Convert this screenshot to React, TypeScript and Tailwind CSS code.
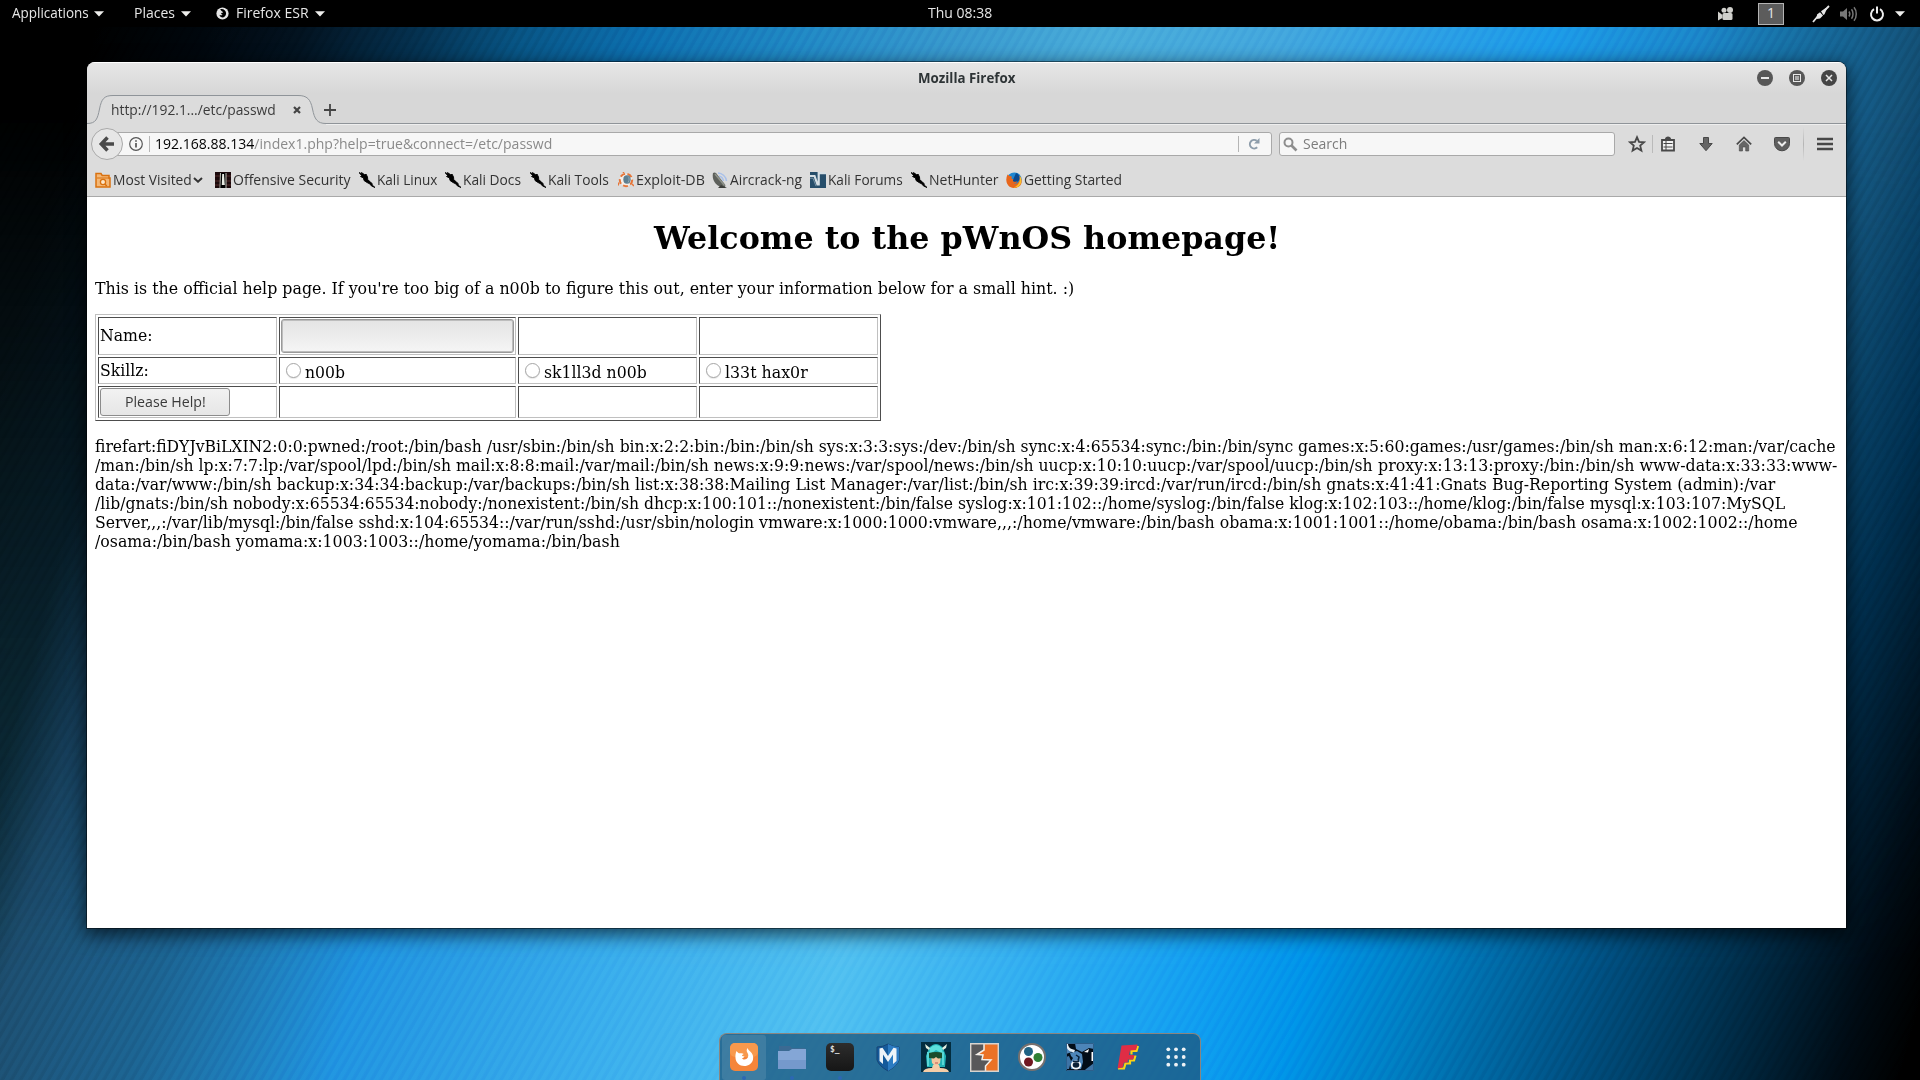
import { useLayoutEffect, useRef, useState } from "react";
import type { ReactNode } from "react";

/* Text squeezed or stretched horizontally to fill a given width. */
function Fit({ w, children, className = "" }: { w: number; children: ReactNode; className?: string }) {
  const ref = useRef<HTMLSpanElement>(null);
  const [scale, setScale] = useState(1);
  useLayoutEffect(() => {
    if (ref.current) setScale(w / ref.current.offsetWidth);
  }, [w]);
  return (
    <span className={"block shrink-0 whitespace-pre " + className} style={{ width: w }}>
      <span ref={ref} className="inline-block origin-left" style={{ transform: `scaleX(${scale})` }}>
        {children}
      </span>
    </span>
  );
}

function Caret({ className = "" }: { className?: string }) {
  return (
    <svg width="10" height="6" viewBox="0 0 10 6" className={"shrink-0 " + className}>
      <path d="M0 .3h10L5 5.6z" fill="#eeeeec" />
    </svg>
  );
}

function TopBar() {
  return (
    <header className="flex h-[27px] w-full items-center bg-black text-[14px] leading-[25px] text-[#e6e6e6]">
      <div className="flex items-center pl-3">
        <Fit w={77} className="pb-[2px]">Applications</Fit>
        <Caret className="ml-[5px]" />
      </div>
      <div className="ml-[30px] flex items-center">
        <Fit w={41} className="pb-[2px]">Places</Fit>
        <Caret className="ml-[6px]" />
      </div>
      <div className="ml-[25px] flex items-center">
        <svg width="13" height="13" viewBox="0 0 13 13" className="shrink-0">
          <circle cx="6.5" cy="6.5" r="6.1" fill="#e6e6e6" />
          <path d="M4.2 2.2c2.8-.8 5.8.9 5.9 4 0 2.600-1.800 4.300-4 4.200C4.700 10.300 3.500 9.200 3.600 7.800c.8.700 2.200.8 3-.1C5.600 7.500 5 7 5.200 6.100l2-.7C6.600 4.300 5.300 4.400 4.200 2.200z" fill="#000" />
        </svg>
        <Fit w={73} className="ml-[7px] pb-[2px]">Firefox ESR</Fit>
        <Caret className="ml-[6px]" />
      </div>
      <Fit w={64} className="ml-[603px] pb-[2px]">Thu 08:38</Fit>
      <svg width="17" height="14" viewBox="0 0 17 14" className="ml-[725px] shrink-0" fill="#d0d0cc">
        <circle cx="7" cy="3.200" r="2.500" />
        <circle cx="13" cy="3" r="3" />
        <rect x="5.500" y="6" width="10" height="7" rx="1.500" />
        <path d="M1 4.500l4.500 3.500v3L1 13.500z" />
      </svg>
      <div className="ml-[24px] flex h-[22px] w-[26px] shrink-0 items-center justify-center border border-[#b4b4b4] bg-[#5c5c5c] pb-[2px]">1</div>
      <svg width="18" height="18" viewBox="0 0 18 18" className="ml-[28px] shrink-0">
        <path d="M1 17l5-6M12 6l5-5" stroke="#e6e6e6" strokeWidth="1.800" />
        <path d="M4.500 14L5 9.500 8 7.200l3 3.300-3 3zM9 6.200L13.700 3l1 1.200L12.500 9.200l-1.200.8z" fill="#e6e6e6" />
      </svg>
      <svg width="17" height="16" viewBox="0 0 17 16" className="ml-[10px] shrink-0" fill="none" stroke="#777">
        <path d="M0 5.500h3L7 2v12L3 10.500H0z" fill="#777" stroke="none" />
        <path d="M9 5.500c1 1.500 1 3.500 0 5M11.500 3.300c2 2.500 2 7 0 9.400M14 1.200c3 3.500 3 10 0 13.600" strokeWidth="1.500" />
      </svg>
      <svg width="16" height="16" viewBox="0 0 16 16" className="ml-[12px] shrink-0" fill="none" stroke="#eee" strokeWidth="2">
        <path d="M5 3.200a6 6 0 1 0 6 0M8 .5v7" />
      </svg>
      <Caret className="ml-[10px]" />
    </header>
  );
}

function TitleBar() {
  return (
    <div className="relative flex h-[32px] items-center border-t border-white bg-linear-to-b from-[#e6e6e6] to-[#d7d7d7]">
      <Fit w={97} className="ml-[831px] pb-[2px] text-[14px] font-bold text-[#2e3436]">Mozilla Firefox</Fit>
      <div className="ml-auto mr-[9px] flex gap-4 pb-px">
        <svg width="16" height="16" viewBox="0 0 16 16">
          <circle cx="8" cy="8" r="8" fill="#575757" />
          <path d="M4 8h8" stroke="#e8e8e8" strokeWidth="2" />
        </svg>
        <svg width="16" height="16" viewBox="0 0 16 16">
          <circle cx="8" cy="8" r="8" fill="#575757" />
          <rect x="4.500" y="4.500" width="7" height="7" fill="none" stroke="#e8e8e8" />
          <rect x="6" y="6" width="4" height="4" fill="#aaa" />
        </svg>
        <svg width="16" height="16" viewBox="0 0 16 16">
          <circle cx="8" cy="8" r="8" fill="#454545" />
          <path d="M5 5l6 6M11 5l-6 6" stroke="#e8e8e8" strokeWidth="1.500" />
        </svg>
      </div>
    </div>
  );
}

function TabStrip() {
  return (
    <div className="relative h-[31px] bg-[#d7d7d7]">
      <svg width="1759" height="31" viewBox="0 0 1759 31" className="absolute inset-0">
        <path d="M0 30V29.500C9 29.500 10.500 25 12.500 15C14.500 5 17 1.500 26 1.500H211C220 1.500 223.500 5 225.500 15C227.500 25 230 29.500 239 29.500H1759V31H0z" fill="#dcdcdc" />
        <path d="M0 29.500C9 29.500 10.500 25 12.500 15C14.500 5 17 1.500 26 1.500H211C220 1.500 223.500 5 225.500 15C227.500 25 230 29.500 239 29.500H1759" fill="none" stroke="#8f9499" />
        <path d="M239 30.500H1759" stroke="#eee" />
      </svg>
      <div className="relative flex h-[31px] items-center text-[14px] text-[#3b3b3b]">
        <Fit w={165} className="ml-[24px]">http://192.1.../etc/passwd</Fit>
        <svg width="8" height="8" viewBox="0 0 8 8" className="ml-[17px]">
          <path d="M1 1l6 6M7 1L1 7" stroke="#444" strokeWidth="2.200" />
        </svg>
        <svg width="12" height="12" viewBox="0 0 12 12" className="ml-[23px]">
          <path d="M0 6h12M6 0v12" stroke="#444" strokeWidth="1.800" />
        </svg>
      </div>
    </div>
  );
}

function NavBar() {
  return (
    <div className="flex h-[38px] items-center text-[14px]">
      <svg width="34" height="34" viewBox="0 0 34 34" className="relative z-10 ml-[3px] shrink-0">
        <circle cx="17" cy="17" r="15.500" fill="#e6e6e6" stroke="#a9a9a9" />
        <path d="M17.500 10.500L11.300 17l6.200 6.500M12 17H24" fill="none" stroke="#4a4a4a" strokeWidth="3.500" />
      </svg>
      <div className="-ml-[8px] flex h-[24px] w-[1156px] shrink-0 items-center rounded-r-[3px] border border-[#a9a9a9] bg-[#f7f7f7]">
        <svg width="14" height="14" viewBox="0 0 14 14" className="ml-[12px] shrink-0">
          <circle cx="7" cy="7" r="6.300" fill="none" stroke="#555" strokeWidth="1.200" />
          <path d="M7 6v4.500M7 3.200v1.600" stroke="#555" strokeWidth="1.700" />
        </svg>
        <div className="ml-[6px] h-4 w-px bg-[#b5b5b5]" />
        <Fit w={397} className="ml-[5px] pb-px text-[#8a8a8a]"><span className="text-black">192.168.88.134</span>/index1.php?help=true&amp;connect=/etc/passwd</Fit>
        <div className="ml-auto h-4 w-px bg-[#b5b5b5]" />
        <svg width="12" height="12" viewBox="0 0 12 12" className="ml-[9px] mr-[11px] shrink-0">
          <path d="M9.200 9.300A4.300 4.300 0 1 1 8.800 2.800" fill="none" stroke="#8d9caa" strokeWidth="2" />
          <path d="M11.500 0v5.500H6z" fill="#8d9caa" />
        </svg>
      </div>
      <div className="ml-[7px] flex h-[24px] w-[336px] shrink-0 items-center rounded-[3px] border border-[#a9a9a9] bg-[#f7f7f7]">
        <svg width="15" height="15" viewBox="0 0 15 15" className="ml-[3px]">
          <circle cx="5.500" cy="5.500" r="4" fill="none" stroke="#8e8e8e" strokeWidth="2" />
          <path d="M8.500 8.500l5 5" stroke="#8e8e8e" strokeWidth="2.600" />
        </svg>
        <Fit w={44} className="ml-[5px] pb-px text-[#7c7c7c]">Search</Fit>
      </div>
      <svg width="18" height="18" viewBox="0 0 18 18" className="ml-[13px] shrink-0">
        <path d="M9 2.200l2 4.600 5 .5-3.800 3.300 1.200 5L9 13l-4.400 2.600 1.200-5L2 7.300l5-.5z" fill="none" stroke="#484848" strokeWidth="1.800" />
      </svg>
      <div className="ml-[6px] h-[18px] w-px bg-[#bababa]" />
      <svg width="16" height="16" viewBox="0 0 16 16" className="ml-[7px] shrink-0">
        <path d="M5 3c0-1.300 1.500-2.500 3-2.500S11 1.700 11 3z" fill="#484848" />
        <path d="M2 4h12v10.500H2z" fill="#f2f2f2" stroke="#484848" strokeWidth="1.800" />
        <path d="M3.500 7.500h9M3.500 11h9M6 5v9" stroke="#484848" strokeWidth="1" />
      </svg>
      <svg width="16" height="16" viewBox="0 0 16 16" className="ml-[22px] shrink-0">
        <path d="M5.500 1.500h5v6h3.700L8 14.700 1.800 7.500h3.700z" fill="#666" stroke="#484848" />
      </svg>
      <svg width="16" height="16" viewBox="0 0 16 16" className="ml-[22px] shrink-0">
        <path d="M.8 8.300L8 1.500l7.200 6.800" fill="none" stroke="#484848" strokeWidth="1.700" />
        <path d="M3.300 9L8 4.600 12.700 9v6H9.700v-4H6.500v4H3.300z" fill="#666" stroke="#484848" strokeWidth=".6" />
      </svg>
      <svg width="16" height="16" viewBox="0 0 16 16" className="ml-[22px] shrink-0">
        <path d="M.5 2.500Q.5 1.500 1.500 1.500h13q1 0 1 1V7.500a7.500 7.300 0 0 1-15 0z" fill="#5f5f5f" stroke="#484848" />
        <path d="M4.200 5.800L8 9.500l3.800-3.700" fill="none" stroke="#eee" strokeWidth="2" />
      </svg>
      <div className="ml-[13px] h-[34px] w-px bg-linear-to-b from-transparent via-[#b5b5b5] to-transparent" />
      <svg width="16" height="14" viewBox="0 0 16 14" className="ml-[13px] shrink-0">
        <path d="M0 2h16M0 7h16M0 12h16" stroke="#484848" strokeWidth="2.600" />
      </svg>
    </div>
  );
}

const Dragon = () => (
  <svg width="16" height="16" viewBox="0 0 16 16" className="shrink-0">
    <path d="M0 .5L3 2l-.5-1.500L6 3l1-1 1.500 3 .3 3L11 9.500l2 2 .2 1.500 2.800 2.500-3.500-1.500-1.500-2L8 10.500 5 8.500 4.500 6 1.500 4.500 3 4z" fill="#000" stroke="#000" strokeWidth=".9" />
  </svg>
);

const VisitedIcon = () => (
  <svg width="16" height="16" viewBox="0 0 16 16" className="shrink-0">
    <path d="M1 15V1.500h5l1.200 2H14V6h1v9z" fill="#f4b877" stroke="#d9710f" strokeWidth="1.500" />
    <path d="M2 6h12" stroke="#d9710f" />
    <circle cx="8" cy="10" r="2.600" fill="#fde6c8" stroke="#d9710f" strokeWidth="1.300" />
    <path d="M9.800 12l2 2" stroke="#d9710f" strokeWidth="1.500" />
  </svg>
);

const OffsecIcon = () => (
  <svg width="16" height="16" viewBox="0 0 16 16" className="shrink-0">
    <path d="M0 0h16v16H0z" fill="#1c0a0c" />
    <path d="M0 4h5M11 4h5M0 9h5M11 9h5M0 13h5M11 13h5" stroke="#40201f" strokeWidth="1.500" />
    <path d="M5 1h6.500v15H4.500z" fill="#b9bcb4" />
    <path d="M6 1h4.500v15H5.300z" fill="#000" />
    <path d="M7.200 2h1.800L9.800 13H6.800z" fill="#e9ece4" />
  </svg>
);

const ExploitIcon = () => (
  <svg width="16" height="16" viewBox="0 0 16 16" className="shrink-0">
    <circle cx="8" cy="8" r="6.200" fill="#f3eee9" stroke="#e6763a" strokeWidth="2" strokeDasharray="5 2.500" />
    <path d="M1 10.500l-1 3M14 12l2 2M5 1l1-1" stroke="#e6763a" strokeWidth="1.500" />
    <ellipse cx="9" cy="7.500" rx="3.700" ry="4.200" fill="#5e7f91" />
    <path d="M10 4.500c1.500 1 1.500 4 0 6" stroke="#8fa9b5" fill="none" />
  </svg>
);

const AircrackIcon = () => (
  <svg width="16" height="16" viewBox="0 0 16 16" className="shrink-0">
    <path d="M1 1C-.5 8 4 15 12.500 15.500c1-1 1-2 .5-3L4 1C3 .3 2 .3 1 1z" fill="#5d605b" />
    <path d="M3 2l9.500 11.500" stroke="#8f948b" strokeWidth="1.500" />
    <path d="M6 1c4 0 8 3.500 8.500 8M7 4c2.500.5 4 2.500 4.500 5" fill="none" stroke="#a9c1ea" strokeWidth="1.500" />
    <path d="M9 13l6 3H6z" fill="#3c3e3a" />
  </svg>
);

const ForumsIcon = () => (
  <svg width="16" height="16" viewBox="0 0 16 16" className="shrink-0">
    <path d="M0 0h16v16H0z" fill="#264e6b" />
    <path d="M0 4h4.500l3 8.500h1.200V1.200H16" fill="none" stroke="#d5dfe5" strokeWidth="2.200" />
    <path d="M0 6.200h3l3 8" fill="none" stroke="#7793a5" />
  </svg>
);

const FirefoxIcon = () => (
  <svg width="16" height="16" viewBox="0 0 16 16" className="shrink-0">
    <circle cx="8.300" cy="7.800" r="7.400" fill="#1f86d0" />
    <path d="M10 1c3 1 4 4 3.500 7l-4 3-3-2" fill="#0b4a91" />
    <path d="M1.500 2.500c.8.300 1.500 1 2 1.600 1 0 2 .4 2.700.9-1 .6-1 1.500-.2 2l1.500.3C6.500 8.300 7 9.800 8.500 9.800c1.500-.2 2-.6 2.700-.2-1 2-2.500 2.500-4.500 2 3.500 1.500 6-1 6.800-3.600.4-2 .2-3-.3-4.500 3 3 3.300 7.500.8 10.300-3 3-8.500 3-11.500-.1C-.3 10.700-.2 6.200 1.500 2.500z" fill="#e8661b" />
    <path d="M13.800 4c2.500 3 2 8-1 10.200-2 1.400-4 1.500-5.500 1 3.500-.5 7.500-4 6.500-11.200z" fill="#fbc02a" />
  </svg>
);

const bookmarks: { label: string; w: number; gap: string; Icon: () => ReactNode }[] = [
  { label: "Offensive Security", w: 118, gap: "ml-[12px]", Icon: OffsecIcon },
  { label: "Kali Linux", w: 60, gap: "ml-[8px]", Icon: Dragon },
  { label: "Kali Docs", w: 58, gap: "ml-[8px]", Icon: Dragon },
  { label: "Kali Tools", w: 61, gap: "ml-[9px]", Icon: Dragon },
  { label: "Exploit-DB", w: 69, gap: "ml-[9px]", Icon: ExploitIcon },
  { label: "Aircrack-ng", w: 72, gap: "ml-[7px]", Icon: AircrackIcon },
  { label: "Kali Forums", w: 75, gap: "ml-[8px]", Icon: ForumsIcon },
  { label: "NetHunter", w: 69, gap: "ml-[8px]", Icon: Dragon },
  { label: "Getting Started", w: 98, gap: "ml-[8px]", Icon: FirefoxIcon },
];

function Bookmarks() {
  return (
    <div className="flex h-[34px] items-center border-b border-[#a9a9a9] pl-2 text-[14px] text-[#333]">
      <VisitedIcon />
      <Fit w={79} className="ml-[2px]">Most Visited</Fit>
      <svg width="10" height="6" viewBox="0 0 10 6" className="ml-[1px]">
        <path d="M1 1l4 3.700L9 1" fill="none" stroke="#333" strokeWidth="2" />
      </svg>
      {bookmarks.map(({ label, w, gap, Icon }) => (
        <div key={label} className={"flex items-center " + gap}>
          <Icon />
          <Fit w={w} className="ml-[2px]">{label}</Fit>
        </div>
      ))}
    </div>
  );
}

function Cell({ children }: { children?: ReactNode }) {
  return (
    <div className="flex items-center border border-t-[#4d4d4d] border-r-[#c0c0c0] border-b-[#c0c0c0] border-l-[#4d4d4d] pl-px">
      {children}
    </div>
  );
}

function Radio({ label, w }: { label: string; w: number }) {
  return (
    <>
      <span className="ml-[5px] h-[15px] w-[15px] shrink-0 rounded-full border border-[#a5a5a5] bg-white shadow-[0_1px_1px_#00000018]" />
      <Fit w={w} className="ml-[4px] pt-[3px]">{label}</Fit>
    </>
  );
}

const passwd: [string, number][][] = [
  [
    ["firefart:fiDYJvBiLXIN2:0:0:pwned:/root:/bin/bash /usr/sbin:/bin/sh bin:x:2:2:bin:/bin:/bin/sh sys:x:3:3:sys:/dev:/bin/sh sync:x:4:65534:sync:/bin:/bin/sync ", 1203],
    ["games:x:5:60:games:/usr/games:/bin/sh man:x:6:12:man:/var/cache", 538],
  ],
  [
    ["/man:/bin/sh lp:x:7:7:lp:/var/spool/lpd:/bin/sh mail:x:8:8:mail:/var/mail:/bin/sh news:x:9:9:news:/var/spool/news:/bin/sh uucp:x:10:10:uucp:/var/spool/uucp:/bin/sh ", 1283],
    ["proxy:x:13:13:proxy:/bin:/bin/sh www-data:x:33:33:www-", 459],
  ],
  [["data:/var/www:/bin/sh backup:x:34:34:backup:/var/backups:/bin/sh list:x:38:38:Mailing List Manager:/var/list:/bin/sh irc:x:39:39:ircd:/var/run/ircd:/bin/sh gnats:x:41:41:Gnats Bug-Reporting System (admin):/var", 1680]],
  [
    ["/lib/gnats:/bin/sh nobody:x:65534:65534:nobody:/nonexistent:/bin/sh dhcp:x:100:101::/nonexistent:/bin/false ", 863],
    ["syslog:x:101:102::/home/syslog:/bin/false klog:x:102:103::/home/klog:/bin/false mysql:x:103:107:MySQL", 827],
  ],
  [
    ["Server,,,:/var/lib/mysql:/bin/false sshd:x:104:65534::/var/run/sshd:/usr/sbin/nologin ", 664],
    ["vmware:x:1000:1000:vmware,,,:/home/vmware:/bin/bash obama:x:1001:1001::/home/obama:/bin/bash osama:x:1002:1002::/home", 1039],
  ],
  [["/osama:/bin/bash yomama:x:1003:1003::/home/yomama:/bin/bash", 525]],
];

function Page() {
  return (
    <main className="flex-1 bg-white px-2 pt-[23px] font-['DejaVu_Serif',serif] text-[16px] leading-[19px] text-black">
      <h1 className="flex h-[37px] justify-center text-[32px] leading-[37px] font-bold">
        <Fit w={626}>Welcome to the pWnOS homepage!</Fit>
      </h1>
      <Fit w={979} className="mt-[22px] h-[19px]">This is the official help page. If you're too big of a n00b to figure this out, enter your information below for a small hint. :)</Fit>
      <div className="mt-[16px] grid h-[107px] w-[786px] grid-cols-[179px_237px_179px_179px] grid-rows-[38px_27px_32px] gap-[2px] border border-t-[#c0c0c0] border-r-[#4d4d4d] border-b-[#4d4d4d] border-l-[#c0c0c0] p-[2px]">
        <Cell><Fit w={53} className="pb-[2px]">Name:</Fit></Cell>
        <Cell>
          <div className="h-[34px] w-[233px] rounded-[3px] border border-[#999] bg-linear-to-b from-[#e4e4e4] to-[#f5f5f5] shadow-[inset_0_0_0_1px_#bdbdbd]" />
        </Cell>
        <Cell />
        <Cell />
        <Cell><Fit w={49}>Skillz:</Fit></Cell>
        <Cell><Radio label="n00b" w={40} /></Cell>
        <Cell><Radio label="sk1ll3d n00b" w={103} /></Cell>
        <Cell><Radio label="l33t hax0r" w={83} /></Cell>
        <Cell>
          <button className="flex h-[28px] w-[130px] items-center justify-center rounded-[3px] border border-[#8c8c8c] bg-linear-to-b from-[#f2f2f2] to-[#e6e6e6] font-['Open_Sans',sans-serif] text-[14px] text-[#3a3a3a]">
            <Fit w={81} className="pb-px text-left">Please Help!</Fit>
          </button>
        </Cell>
        <Cell />
        <Cell />
        <Cell />
      </div>
      <div className="mt-[16px]">
        {passwd.map((line, i) => (
          <div key={i} className="flex h-[19px]">
            {line.map(([text, w]) => <Fit key={text} w={w}>{text}</Fit>)}
          </div>
        ))}
      </div>
    </main>
  );
}

const dots = [5, 12, 19];

function Dock() {
  return (
    <nav className="mx-auto mt-auto flex h-[47px] w-[482px] items-center rounded-t-[8px] border border-b-0 border-[#8a8580] bg-[#1e577dc4]">
      <div className="relative mr-[2px] ml-[2px] flex h-[45px] w-[44px] shrink-0 items-center justify-center rounded-[3px] bg-white/10">
        <svg width="28" height="28" viewBox="0 0 28 28">
          <rect width="28" height="28" rx="5" fill="#f5853a" />
          <rect width="28" height="14" rx="5" fill="#f8994d" />
          <path d="M6.500 8c1.500 2 2.300 2.500 4 2.300 1.600-.2 2.600.2 3.200.7-1.200.5-1.700 1.300-1.700 2l2.500.6c-.8 1.200-1.500 1.500-2.500 1.600 1 1.800 3.300 1.600 4.700.5 2-1.600 2-4.200.7-6-1-1.600-1-3.200.2-4.700.4 1.600 1.200 2.200 2.400 3.300 2.600 2.200 3.700 5 3 8.200-.9 4-4.400 6.500-8.700 6.500-4.800 0-8.500-3.400-8.800-8-.2-2.500 0-4.800 1-7z" fill="#fff" />
        </svg>
        <span className="absolute bottom-0 h-1 w-1 rounded-full bg-[#2c67b4]" />
      </div>
      <div className="relative flex h-[45px] w-12 shrink-0 items-center justify-center">
        <svg width="28" height="28" viewBox="0 0 28 28">
          <path d="M1 3h11l2 2h13v6H1z" fill="#3b6a93" />
          <path d="M0 8h11l3-2h14v20H0z" fill="#84a6d6" />
          <path d="M0 17h28v9H0z" fill="#7599cc" />
        </svg>
        <span className="absolute bottom-0 h-1 w-1 rounded-full bg-[#2c67b4]" />
      </div>
      <div className="relative flex h-[45px] w-12 shrink-0 items-center justify-center">
        <div className="h-7 w-7 rounded-[5px] bg-linear-to-b from-[#2d2d2d] to-[#161616] pt-[2px] pl-[4px] font-['DejaVu_Sans_Mono',monospace] text-[8px] leading-[9px] font-bold text-[#ddd]">$_</div>
        <span className="absolute bottom-0 h-1 w-1 rounded-full bg-[#2c67b4]" />
      </div>
      <div className="flex w-12 shrink-0 justify-center">
        <svg width="24" height="29" viewBox="0 0 24 29">
          <path d="M1 4q6 0 11-3 5 3 11 3v13q-2 6-11 11Q3 23 1 17z" fill="#155a9b" stroke="#164576" />
          <path d="M12 1q5 3 11 3v13q-2 6-11 11z" fill="#2c7bc2" />
          <path d="M3.500 5.500l3-.8 5.500 8.300 5.500-8.300 3 .8V18L17 21V11.500L12 19 7 11.500V21L3.500 18z" fill="#eef3f8" />
        </svg>
      </div>
      <div className="flex w-12 shrink-0 justify-center">
        <svg width="30" height="30" viewBox="0 0 30 30">
          <path d="M0 0h30v30H0z" fill="#032d3f" />
          <path d="M8 6q7-8 14 0l3 8-1 11H6L5 14z" fill="#21b2b7" />
          <path d="M9 6q6-6 12 0l1 6-7-4-7 5z" fill="#5ce0dc" />
          <path d="M4 2l5 4-1 2-3-2zM26 2l-5 4 1 2 3-2z" fill="#e4efe0" />
          <path d="M10 13h10l-1 8-4 4-4-4z" fill="#f2c7a0" />
          <path d="M8 11q7-2 14 0v5l-5 .5-2-1.500-2 1.500L8 16z" fill="#194d2c" />
          <path d="M2 30q1-4 9-4l1-3h6l1 3q8 0 9 4z" fill="#f5cda8" />
          <path d="M7 10v14M22 10v13" stroke="#59d7d7" strokeWidth="2" />
          <path d="M14 21h3" stroke="#c75450" />
        </svg>
      </div>
      <div className="flex w-12 shrink-0 justify-center">
        <svg width="29" height="29" viewBox="0 0 29 29">
          <path d="M.7.700h27.600v27.600H.7z" fill="#eb7226" />
          <path d="M.7.700H14V7L7 11.500l6 .5-1 4.500 9 .5-5.500 6v5.300H.7z" fill="#58585a" />
          <path d="M14 1v6l-7 4.500 6 .5-1 4.500 9 .5-5.500 6v5" fill="none" stroke="#f3efea" strokeWidth="1.500" />
          <path d="M.7.700h27.600v27.600H.7z" fill="none" stroke="#d8d4cf" strokeWidth="1.400" />
        </svg>
      </div>
      <div className="flex w-12 shrink-0 justify-center">
        <svg width="28" height="28" viewBox="0 0 28 28">
          <circle cx="14" cy="14" r="13" fill="#fff" stroke="#77716f" strokeWidth="2" />
          <circle cx="10.500" cy="8.500" r="4.500" fill="#1f6385" />
          <circle cx="20" cy="14.500" r="4.500" fill="#2f7f35" />
          <circle cx="10.500" cy="19" r="4.500" fill="#711820" />
        </svg>
      </div>
      <div className="flex w-12 shrink-0 justify-center">
        <svg width="28" height="28" viewBox="0 0 28 28">
          <path d="M0 0h28v28H0z" fill="#020d18" />
          <path d="M9 0h19v6l-5-1-7 4-6-3zM0 4l6 5-6 2z" fill="#4d85b8" />
          <path d="M4 10l7-2 5 3 1 8-2 7H5l-1-6 3-5-2-2z" fill="#4d85b8" />
          <path d="M0 14l3-1 2 5-2 8H0zM20 26l8-6v8H18z" fill="#3e74a6" />
          <path d="M2 0c0 4 2 6 7 7l-1 2.500C3 8.500 0 6 0 1z" fill="#e2ecf3" />
          <path d="M18 9l5-3-1 3.500z" fill="#fff" />
          <path d="M10 12l3 2-1 4" stroke="#08213a" fill="none" strokeWidth="1.500" />
          <ellipse cx="10" cy="22" rx="4.200" ry="3.600" fill="#0b2035" stroke="#f5f8fa" strokeWidth="1.800" />
          <path d="M7 18.500h6" stroke="#08213a" strokeWidth="1.500" />
          <path d="M26.500 9v9" stroke="#fff" strokeWidth="2" />
          <path d="M.5.500h27v27H.5z" fill="none" stroke="#2d5f8b" />
        </svg>
      </div>
      <div className="flex w-12 shrink-0 justify-center">
        <svg width="26" height="28" viewBox="0 0 26 28">
          <path d="M23 3l-1.500 5h-5v3.500M20.500 12.500l-1.500 5h-4v3h-4.500l-1.500 5H3" fill="none" stroke="#fbd114" strokeWidth="2.200" />
          <path d="M6.500 2.500L22.500 1.500l-1.500 5.500-6 .5-1 4.500h5.500l-1.500 4.500H13l-.5 3H9L7.500 24.500 2.500 25.500z" fill="#df2d45" />
        </svg>
      </div>
      <div className="flex w-12 shrink-0 justify-center">
        <svg width="24" height="24" viewBox="0 0 24 24" fill="#eef2f5">
          {dots.map((y) => dots.map((x) => <circle key={`${x}-${y}`} cx={x + (x - 12) * .1} cy={y + (y - 12) * .1} r="1.900" />))}
        </svg>
      </div>
    </nav>
  );
}

export default function App() {
  return (
    <div className="relative isolate flex h-[1080px] w-[1920px] flex-col overflow-hidden font-['Open_Sans',sans-serif]">
      <div className="absolute inset-0 -z-10 bg-[linear-gradient(105deg,#0d2f3c_200px,#1c4b6b_259px,#1b5f8c_404px,#1f8fdf_597px,#37aaec_839px,#4ebef0_1061px,#33adf0_1225px,#109af0_1418px,#008fe8_1515px,#0077bd_1631px,#004f80_1785px,#002f4c_1920px,#000a12_2056px,#000_2114px)]" />
      <div className="absolute inset-0 -z-10 bg-[linear-gradient(105deg,#000_99px,#00060c_205px,#02121f_302px,#04304e_418px,#07517f_514px,#0c6aab_630px,#1f83c2_785px,#3593cb_930px,#46a8d8_1075px,#40a3dc_1248px,#2b9be3_1384px,#1b97e8_1509px,#1a80c6_1654px,#166da3_1731px,#124c70_1867px,#003458_1960px,#000_2134px)] [mask-image:linear-gradient(to_bottom,#000_10%,transparent_90%)]" />
      <div className="absolute inset-0 -z-10 bg-[repeating-linear-gradient(120deg,#ffffff12_0px,#ffffff12_3px,transparent_5px,transparent_7px,#ffffff12_8px)] mix-blend-overlay" />
      <TopBar />
      <section className="mt-[35px] ml-[87px] flex h-[866px] w-[1759px] shrink-0 flex-col overflow-hidden rounded-t-[8px] bg-[#dcdcdc] shadow-[0_0_0_1px_#00000070,0_5px_18px_2px_#000000a0]">
        <TitleBar />
        <TabStrip />
        <NavBar />
        <Bookmarks />
        <Page />
      </section>
      <Dock />
    </div>
  );
}
